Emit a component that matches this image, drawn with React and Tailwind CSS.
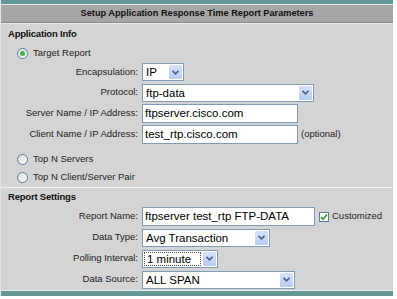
import React from 'react';

function Chevron() {
    return (
        <svg width="7" height="5" viewBox="0 0 7 5" className="block">
            <path d="M0.5 0.8 L3.5 3.8 L6.5 0.8" fill="none" stroke="#4d6185" strokeWidth="1.6" />
        </svg>
    );
}

function Select({ value, width, focused }) {
    return (
        <div
            className="flex h-[18px] items-stretch border border-[#7f9db9] bg-white"
            style={{ width }}
        >
            <div
                className={
                    'm-[1px] flex flex-1 items-center overflow-hidden pl-[2px] ' +
                    (focused ? 'border border-dotted border-[#555]' : '')
                }
            >
                <span className="text-[11.5px] leading-[14px] text-black whitespace-nowrap">{value}</span>
            </div>
            <div className="m-[1px] flex w-[13px] items-center justify-center rounded-[1px] bg-gradient-to-b from-[#d7e2fc] to-[#b9cbf4]">
                <Chevron />
            </div>
        </div>
    );
}

function Input({ value, width }) {
    return (
        <div
            className="flex h-[19px] items-center border border-[#7f9db9] bg-white pl-[2px] text-[11.5px] text-black whitespace-nowrap overflow-hidden"
            style={{ width }}
        >
            {value}
        </div>
    );
}

function Radio({ checked }) {
    return (
        <span className="relative flex size-[11px] items-center justify-center rounded-full border border-[#5b7a9c] bg-gradient-to-br from-[#dcdcd7] to-white">
            {checked && <span className="size-[5px] rounded-full bg-[#3fb342]" />}
        </span>
    );
}

function Row({ label, children, height = 'h-[21px]' }) {
    return (
        <div className={`flex items-center ${height}`}>
            <div className="w-[138px] pr-[1px] text-right text-[9.5px] text-[#222]">{label}</div>
            <div className="ml-[3px] flex items-center gap-[3px]">{children}</div>
        </div>
    );
}

function RadioRow({ checked, label, height }) {
    return (
        <div className={`flex items-center pl-[16px] ${height}`}>
            <Radio checked={checked} />
            <span className="ml-[5px] text-[9.5px] text-[#222]">{label}</span>
        </div>
    );
}

export default function App() {
    return (
        <div className="h-[299px] w-[397px] bg-white font-['Liberation_Sans',Arial,sans-serif]">
            <div className="w-[393px] border-l border-[#e4e4e4]">
                <div className="h-[4px] bg-[#639896]" />
                <div className="h-[1px] bg-[#e6eeee]" />
                <div className="flex h-[17px] items-center justify-center bg-[#a6a6a6] text-[9.2px] font-bold text-[#111]">
                    Setup Application Response Time Report Parameters
                </div>
                <div className="h-[1px] bg-[#8a8a8a]" />
                <div className="h-[1px] bg-[#ececec]" />

                <div className="bg-[#d4d4d4]">
                    <div className="flex h-[20px] items-center pl-[7px] pt-[1px] text-[9.5px] font-bold tracking-[-0.2px] text-[#111]">
                        Application Info
                    </div>
                    <RadioRow checked label="Target Report" height="h-[18px]" />
                    <Row label="Encapsulation:" height="h-[20px]">
                        <Select value="IP" width="42px" />
                    </Row>
                    <Row label="Protocol:">
                        <Select value="ftp-data" width="172px" />
                    </Row>
                    <Row label="Server Name / IP Address:">
                        <Input value="ftpserver.cisco.com" width="156px" />
                    </Row>
                    <Row label="Client Name / IP Address:">
                        <Input value="test_rtp.cisco.com" width="156px" />
                        <span className="text-[9.5px] text-[#222]">(optional)</span>
                    </Row>
                    <div className="h-[5px]" />
                    <RadioRow label="Top N Servers" height="h-[18px]" />
                    <RadioRow label="Top N Client/Server Pair" height="h-[19px]" />
                </div>

                <div className="h-[1px] bg-[#f2f2f2]" />

                <div className="bg-[#d4d4d4]">
                    <div className="flex h-[18px] items-center pl-[7px] pt-[1px] text-[9.5px] font-bold tracking-[-0.2px] text-[#111]">
                        Report Settings
                    </div>
                    <Row label="Report Name:">
                        <Input value="ftpserver test_rtp FTP-DATA" width="173px" />
                        <span className="ml-[1px] flex size-[10px] items-center justify-center border border-[#5b7a9c] bg-white">
                            <svg width="8" height="8" viewBox="0 0 8 8">
                                <path d="M1 4 L3 6.2 L7 1.6" fill="none" stroke="#21a121" strokeWidth="1.6" />
                            </svg>
                        </span>
                        <span className="text-[9.5px] text-[#222]">Customized</span>
                    </Row>
                    <Row label="Data Type:">
                        <Select value="Avg Transaction" width="128px" />
                    </Row>
                    <Row label="Polling Interval:">
                        <Select value="1 minute" width="76px" focused />
                    </Row>
                    <Row label="Data Source:">
                        <Select value="ALL SPAN" width="153px" />
                    </Row>
                </div>
                <div className="h-[1px] bg-[#e8eeee]" />
                <div className="h-[5px] bg-[#639896]" />
            </div>
        </div>
    );
}
